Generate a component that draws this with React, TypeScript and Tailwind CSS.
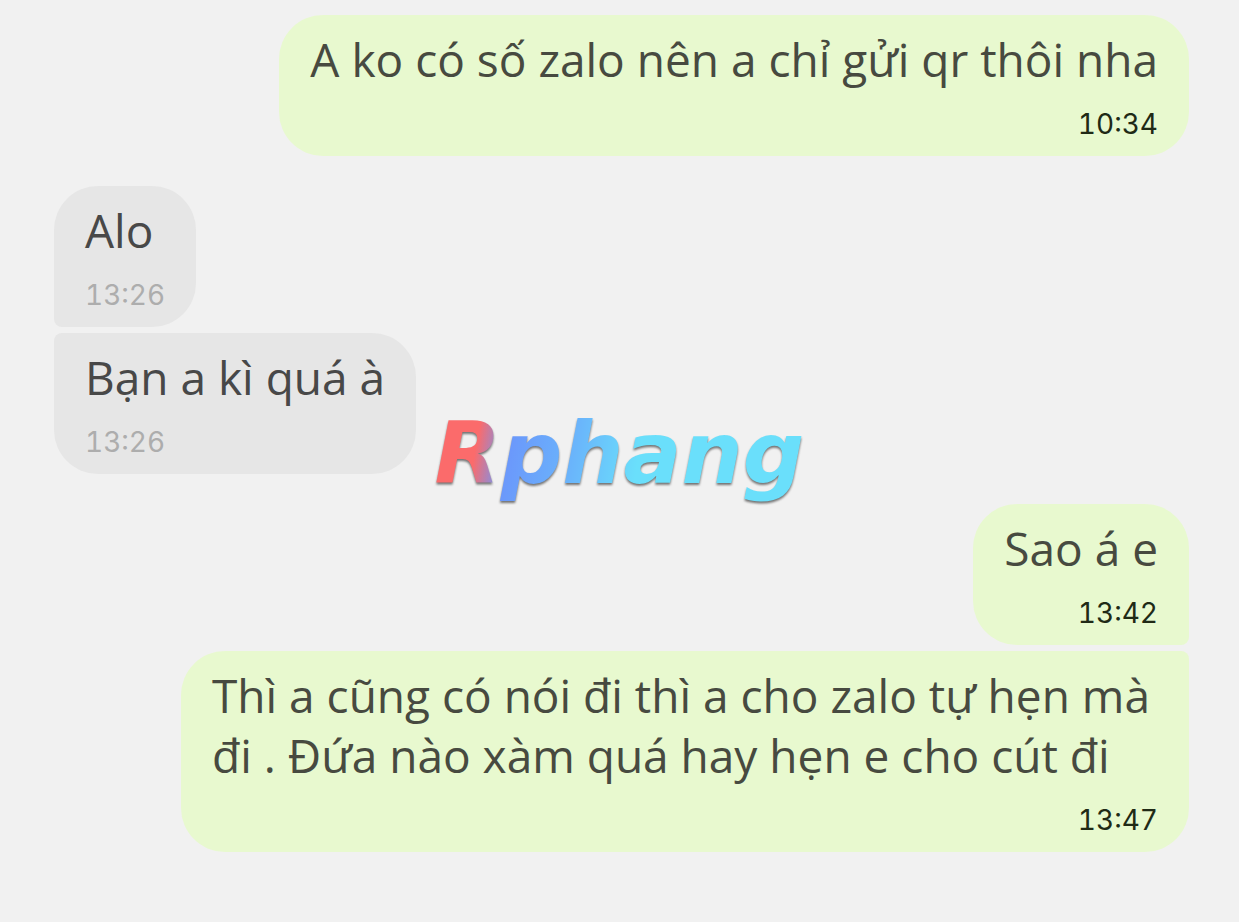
import { clsx } from 'clsx';

interface Message {
  id: number;
  text: string;
  time: string;
}

interface MessageGroup {
  mine: boolean;
  messages: Message[];
}

const groups: MessageGroup[] = [
  {
    mine: true,
    messages: [{ id: 1, text: 'A ko có số zalo nên a chỉ gửi qr thôi nha', time: '10:34' }],
  },
  {
    mine: false,
    messages: [
      { id: 2, text: 'Alo', time: '13:26' },
      { id: 3, text: 'Bạn a kì quá à', time: '13:26' },
    ],
  },
  {
    mine: true,
    messages: [
      { id: 4, text: 'Sao á e', time: '13:42' },
      {
        id: 5,
        text: 'Thì a cũng có nói đi thì a cho zalo tự hẹn mà đi . Đứa nào xàm quá hay hẹn e cho cút đi',
        time: '13:47',
      },
    ],
  },
];

interface BubbleProps {
  message: Message;
  mine: boolean;
  first: boolean;
  last: boolean;
}

function Bubble({ message, mine, first, last }: BubbleProps) {
  return (
    <li
      className={clsx(
        'w-fit max-w-[1008px] rounded-[44px] px-[31px] pt-3.5 pb-3',
        mine ? 'bg-[#e8f9cf]' : 'bg-[#e6e6e6]',
        // Corners between two bubbles of the same sender are squared off
        !first && (mine ? 'rounded-tr-lg' : 'rounded-tl-lg'),
        !last && (mine ? 'rounded-br-lg' : 'rounded-bl-lg')
      )}
    >
      <p
        className={clsx(
          "font-['Open_Sans',sans-serif] text-[46px] leading-[60px]",
          mine ? 'text-[#474a40]' : 'text-[#484848]'
        )}
      >
        {message.text}
      </p>
      <time
        className={clsx(
          "mt-[15px] block font-['Inter',sans-serif] text-[28px] leading-10 tabular-nums",
          mine ? 'text-right text-[#202a16]' : 'text-[#adadad]'
        )}
      >
        {message.time}
      </time>
    </li>
  );
}

function Watermark() {
  return (
    <div className="pointer-events-none fixed inset-0 flex items-center justify-center pb-4">
      <span className="bg-linear-[100deg,#fb6b6b_13%,#6b97fb_21%,#6ab4fb_38%,#6adffb_55%] bg-clip-text font-['DejaVu_Sans',sans-serif] text-[86px] leading-normal font-bold text-transparent italic drop-shadow-[0_2px_1px_rgba(60,60,60,0.7)]">
        Rphang
      </span>
    </div>
  );
}

export default function App() {
  return (
    <main className="min-h-screen bg-[#f1f1f1] pt-[15px] pr-[50px] pb-[30px] pl-[54px]">
      <div className="flex flex-col gap-[30px]">
        {groups.map((group, index) => (
          <ul
            key={index}
            className={clsx('flex flex-col gap-1.5', group.mine ? 'items-end' : 'items-start')}
          >
            {group.messages.map((message, i) => (
              <Bubble
                key={message.id}
                message={message}
                mine={group.mine}
                first={i === 0}
                last={i === group.messages.length - 1}
              />
            ))}
          </ul>
        ))}
      </div>
      <Watermark />
    </main>
  );
}
